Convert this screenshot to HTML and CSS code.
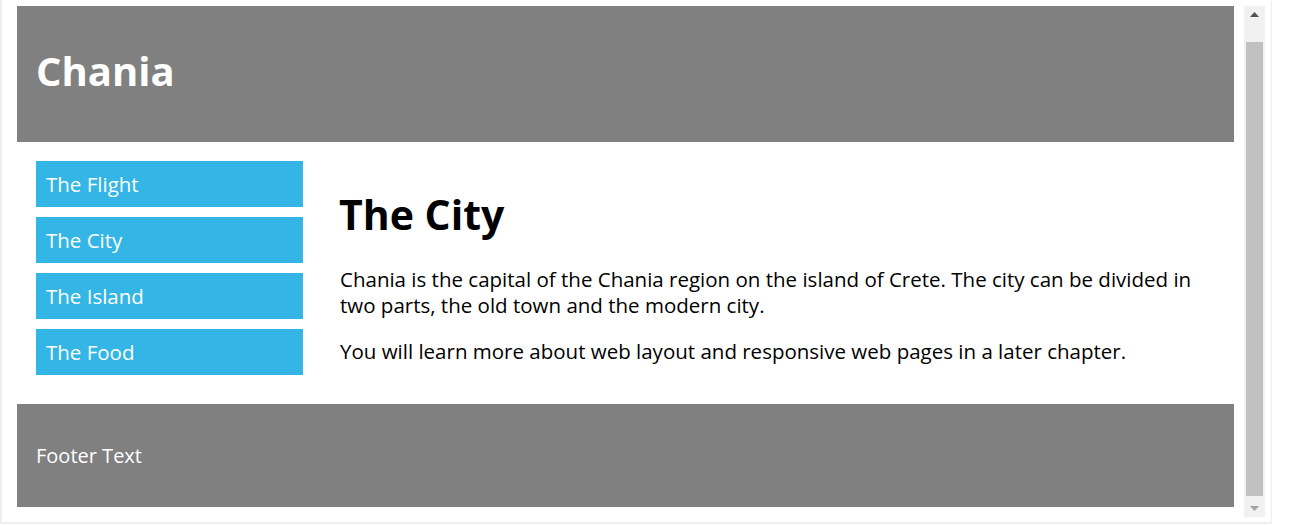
FILE: index.html
```html
<!DOCTYPE html>
<html lang="en">
<head>
<meta charset="utf-8">
<title>Chania</title>
<link rel="stylesheet" href="styles.css">
</head>
<body>
<div class="frame">
  <div class="viewport">
    <div class="header">
      <h1>Chania</h1>
    </div>
    <div class="row">
      <div class="menu">
        <ul>
          <li>The Flight</li>
          <li>The City</li>
          <li>The Island</li>
          <li>The Food</li>
        </ul>
      </div>
      <div class="main">
        <h2>The City</h2>
        <p>Chania is the capital of the Chania region on the island of Crete. The city can be divided in two parts, the old town and the modern city.</p>
        <p>You will learn more about web layout and responsive web pages in a later chapter.</p>
      </div>
    </div>
    <div class="footer">
      <p>Footer Text</p>
    </div>
  </div>
  <div class="scrollbar">
    <div class="arrow">
      <svg width="9" height="5" viewBox="0 0 9 5"><polygon points="4.5,0 9,5 0,5" fill="#505050"/></svg>
    </div>
    <div class="track-top"></div>
    <div class="thumb"></div>
    <div class="track-bottom"></div>
    <div class="arrow">
      <svg width="9" height="5" viewBox="0 0 9 5"><polygon points="0,0 9,0 4.5,5" fill="#a3a3a3"/></svg>
    </div>
  </div>
</div>
</body>
</html>
```

FILE: styles.css
```css
* {
  box-sizing: border-box;
}

body {
  margin: 0;
  background: #ffffff;
  font-family: "Open Sans", "Noto Sans", sans-serif;
  color: #000000;
}

.frame {
  width: 1272px;
  height: 524px;
  display: flex;
  border-left: 2px solid #efefef;
  border-right: 1px solid #efefef;
  border-bottom: 2px solid #efefef;
  overflow: hidden;
}

.viewport {
  flex: 1;
  min-width: 0;
  padding: 6px 10px 0 15px;
  overflow: hidden;
}

.header {
  background-color: #808080;
  color: #ffffff;
  padding: 19px;
  height: 136px;
}

.header h1 {
  margin: 18px 0 0 0;
  font-size: 40px;
  line-height: 56px;
  font-weight: 700;
}

.row {
  display: flex;
}

.menu {
  width: 304px;
  flex: none;
  padding: 19px 18px 19px 19px;
}

.menu ul {
  list-style: none;
  margin: 0;
  padding: 0;
}

.menu li {
  background-color: #33b5e5;
  color: #ffffff;
  padding: 10px;
  height: 46px;
  margin-bottom: 10px;
  font-size: 20.5px;
  line-height: 27px;
}

.main {
  flex: 1;
  padding: 19px 19px 0 19px;
}

.main h2 {
  margin: 23px 0 22px -1px;
  font-size: 41px;
  line-height: 60px;
  font-weight: 700;
}

.main p {
  margin: 0 0 20px 0;
  font-size: 20.5px;
  line-height: 26px;
}

.footer {
  background-color: #808080;
  color: #ffffff;
  padding: 19px 19px 18px 19px;
}

.footer p {
  margin: 20px 0;
  font-size: 20px;
  line-height: 26px;
}

.scrollbar {
  width: 21px;
  height: 511px;
  margin: 6px 6px 0 0;
  background: #f1f1f1;
  display: flex;
  flex-direction: column;
  align-items: center;
  flex: none;
}

.arrow {
  height: 17px;
  width: 21px;
  display: flex;
  align-items: center;
  justify-content: center;
}

.arrow svg {
  display: block;
}

.track-top {
  height: 19px;
}

.thumb {
  width: 17px;
  height: 454px;
  background: #c1c1c1;
}

.track-bottom {
  height: 4px;
}
```
